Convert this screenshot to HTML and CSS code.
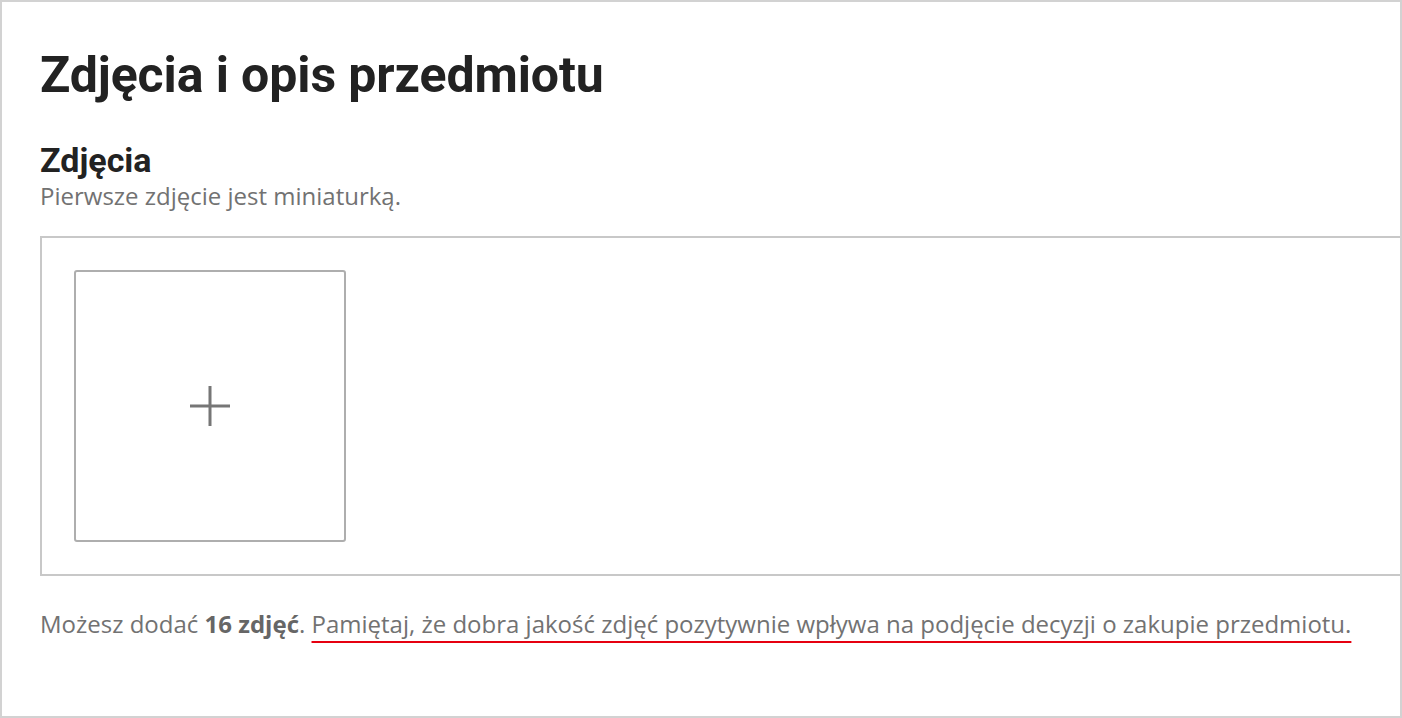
FILE: index.html
```html
<!DOCTYPE html>
<html lang="pl">
<head>
<meta charset="utf-8">
<link rel="stylesheet" href="styles.css">
</head>
<body>
<div class="frame">
  <h1 class="title">Zdjęcia i opis przedmiotu</h1>
  <h2 class="subtitle">Zdjęcia</h2>
  <p class="hint">Pierwsze zdjęcie jest miniaturką.</p>
  <div class="dropzone">
    <div class="tile">
      <svg class="plus" width="40" height="40" viewBox="0 0 40 40">
        <rect x="18.5" y="0" width="3" height="40" fill="#767676"/>
        <rect x="0" y="18.5" width="40" height="3" fill="#767676"/>
      </svg>
    </div>
  </div>
  <p class="note">Możesz dodać <b>16 zdjęć</b>. <span class="mark">Pamiętaj, że dobra jakość zdjęć pozytywnie wpływa na podjęcie decyzji o zakupie przedmiotu.</span></p>
</div>
</body>
</html>
```
FILE: styles.css
```css
html, body {
  margin: 0;
  padding: 0;
  background: #fff;
}
.frame {
  box-sizing: border-box;
  width: 1402px;
  height: 718px;
  border: 2px solid #d2d2d2;
  padding: 43px 0 0 38px;
  overflow: hidden;
}
.title {
  margin: 0;
  font-family: Roboto, sans-serif;
  font-weight: 700;
  font-size: 50px;
  line-height: 60px;
  color: #222;
  letter-spacing: -0.1px;
}
.subtitle {
  margin: 35px 0 0 0;
  font-family: Roboto, sans-serif;
  font-weight: 700;
  font-size: 34px;
  line-height: 40px;
  color: #222;
}
.hint {
  margin: 2px 0 0 0;
  font-family: "Open Sans", sans-serif;
  font-size: 24px;
  line-height: 28px;
  color: #727272;
}
.dropzone {
  margin-top: 26px;
  height: 340px;
  border: 2px solid #c8c8c8;
  border-right: none;
  box-sizing: border-box;
  padding: 32px 0 0 32px;
}
.tile {
  box-sizing: border-box;
  width: 272px;
  height: 272px;
  border: 2px solid #aeaeae;
  border-radius: 3px;
  display: flex;
  align-items: center;
  justify-content: center;
}
.note {
  margin: 34px 0 0 0;
  font-family: "Open Sans", sans-serif;
  font-size: 24px;
  line-height: 28px;
  color: #727272;
}
.note b {
  color: #666;
  font-weight: 700;
}
.mark {
  text-decoration: underline;
  text-decoration-color: #e60010;
  text-decoration-thickness: 2px;
  text-underline-offset: 8px;
}
```
